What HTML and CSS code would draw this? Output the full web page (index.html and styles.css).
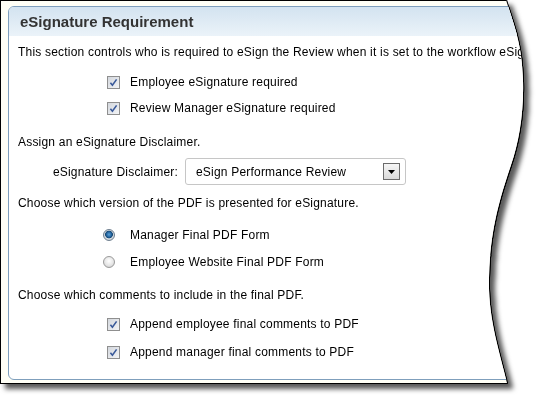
FILE: index.html
```html
<!DOCTYPE html>
<html>
<head>
<meta charset="utf-8">
<link rel="stylesheet" href="styles.css">
</head>
<body>
<div class="sheet">
  <div class="page">
    <section class="panel">
      <header class="panel-head">eSignature Requirement</header>
      <div class="panel-body">
        <p class="para p-intro">This section controls who is required to eSign the Review when it is set to the workflow eSignature step.</p>
        <div class="opts opts-sign">
          <label class="opt"><svg class="cb" width="13" height="13" viewBox="0 0 13 13"><defs><linearGradient id="cbg" x1="0" y1="0" x2="1" y2="1"><stop offset="0" stop-color="#d2d6dc"/><stop offset="1" stop-color="#f4f5f7"/></linearGradient></defs><rect x="0.5" y="0.5" width="12" height="12" fill="url(#cbg)" stroke="#8f8f8f"/><path d="M3.4 6.8 L5.4 9.2 L9.6 3.4" fill="none" stroke="#3a5a9a" stroke-width="1.6"/></svg><span>Employee eSignature required</span></label>
          <label class="opt"><svg class="cb" width="13" height="13" viewBox="0 0 13 13"><rect x="0.5" y="0.5" width="12" height="12" fill="url(#cbg)" stroke="#8f8f8f"/><path d="M3.4 6.8 L5.4 9.2 L9.6 3.4" fill="none" stroke="#3a5a9a" stroke-width="1.6"/></svg><span>Review Manager eSignature required</span></label>
        </div>
        <p class="para p-assign">Assign an eSignature Disclaimer.</p>
        <div class="field">
          <span class="field-label">eSignature Disclaimer:</span>
          <div class="select">
            <span class="select-text">eSign Performance Review</span>
            <span class="select-btn"><svg width="7" height="4" viewBox="0 0 7 4"><path d="M0 0 H7 L3.5 4 Z" fill="#000"/></svg></span>
          </div>
        </div>
        <p class="para p-version">Choose which version of the PDF is presented for eSignature.</p>
        <div class="opts opts-radio">
          <label class="opt"><span class="radio on"></span><span>Manager Final PDF Form</span></label>
          <label class="opt"><span class="radio"></span><span>Employee Website Final PDF Form</span></label>
        </div>
        <p class="para p-comments">Choose which comments to include in the final PDF.</p>
        <div class="opts opts-comments">
          <label class="opt"><svg class="cb" width="13" height="13" viewBox="0 0 13 13"><rect x="0.5" y="0.5" width="12" height="12" fill="url(#cbg)" stroke="#8f8f8f"/><path d="M3.4 6.8 L5.4 9.2 L9.6 3.4" fill="none" stroke="#3a5a9a" stroke-width="1.6"/></svg><span>Append employee final comments to PDF</span></label>
          <label class="opt"><svg class="cb" width="13" height="13" viewBox="0 0 13 13"><rect x="0.5" y="0.5" width="12" height="12" fill="url(#cbg)" stroke="#8f8f8f"/><path d="M3.4 6.8 L5.4 9.2 L9.6 3.4" fill="none" stroke="#3a5a9a" stroke-width="1.6"/></svg><span>Append manager final comments to PDF</span></label>
        </div>
      </div>
    </section>
  </div>
</div>
</body>
</html>
```
FILE: styles.css
```css
html, body {
  margin: 0;
  padding: 0;
  background: #ffffff;
}
body {
  font-family: "Liberation Sans", Arial, sans-serif;
  font-size: 12px;
  color: #000;
}
.sheet {
  width: 540px;
  height: 400px;
  filter: drop-shadow(1.5px 0 0 #000) drop-shadow(0 1px 0 #000) drop-shadow(5px 5px 2.5px rgba(0,0,0,0.65));
}
.page {
  box-sizing: border-box;
  width: 540px;
  height: 383px;
  background: #fffff6;
  border-left: 1px solid #000;
  border-top: 1px solid #000;
  padding: 5px 0 0 7px;
  overflow: hidden;
  clip-path: path("M0 0 H506 C515 28 522 45 523 80 C524 112 519 142 511 165 C501 195 490 228 489 278 C488 318 499 350 507 383 H0 Z");
}
.panel {
  box-sizing: border-box;
  width: 560px;
  height: 374px;
  background: #fff;
  border: 1px solid #7f9fbc;
  border-radius: 6px;
  overflow: hidden;
}
.panel-head {
  height: 29px;
  box-sizing: border-box;
  padding: 6px 0 0 11px;
  background: linear-gradient(#d3e3f0, #ebf3f9);
  font-size: 15px;
  font-weight: bold;
  color: #333;
  line-height: 18px;
}
.panel-body {
  display: flex;
  flex-direction: column;
  padding: 8px 0 0 9px;
  letter-spacing: 0.2px;
}
.para {
  margin: 0;
  line-height: 16px;
  white-space: nowrap;
}
.opts {
  display: flex;
  flex-direction: column;
}
.opt {
  display: flex;
  align-items: center;
  height: 16px;
  white-space: nowrap;
}
.opts-sign { margin-top: 14px; gap: 10px; }
.opts-sign .opt, .opts-comments .opt { padding-left: 89px; }
.cb { flex: none; margin-right: 10px; }
.p-assign { margin-top: 18px; }
.field {
  display: flex;
  align-items: center;
  margin-top: 8px;
}
.field-label {
  width: 160px;
  text-align: right;
  margin-right: 7px;
}
.select {
  box-sizing: border-box;
  width: 221px;
  height: 27px;
  border: 1px solid #c6c6c6;
  border-radius: 3px;
  background: #fff;
  display: flex;
  align-items: center;
  justify-content: space-between;
  padding: 0 5px 0 10px;
}
.select-btn {
  box-sizing: border-box;
  width: 17px;
  height: 17px;
  border: 1px solid #6b6b6b;
  background: linear-gradient(#f6f6f6, #d9d9d9);
  display: flex;
  align-items: center;
  justify-content: center;
}
.p-version { margin-top: 10px; }
.opts-radio { margin-top: 16px; gap: 11px; }
.opts-radio .opt { padding-left: 85px; }
.radio {
  flex: none;
  box-sizing: border-box;
  width: 12px;
  height: 12px;
  border-radius: 50%;
  border: 1px solid #9a9a9a;
  background: radial-gradient(circle at 50% 40%, #ffffff 0%, #e6e6e6 55%, #c4c4c4 100%);
  margin-right: 15px;
}
.radio.on {
  border-color: #6f7f8f;
  background: radial-gradient(circle at 50% 45%, #5aa3dc 0%, #1d5b94 38%, #16466f 48%, #d8dee4 56%, #b8c0c8 100%);
}
.p-comments { margin-top: 17px; }
.opts-comments { margin-top: 13px; gap: 12px; }
```
